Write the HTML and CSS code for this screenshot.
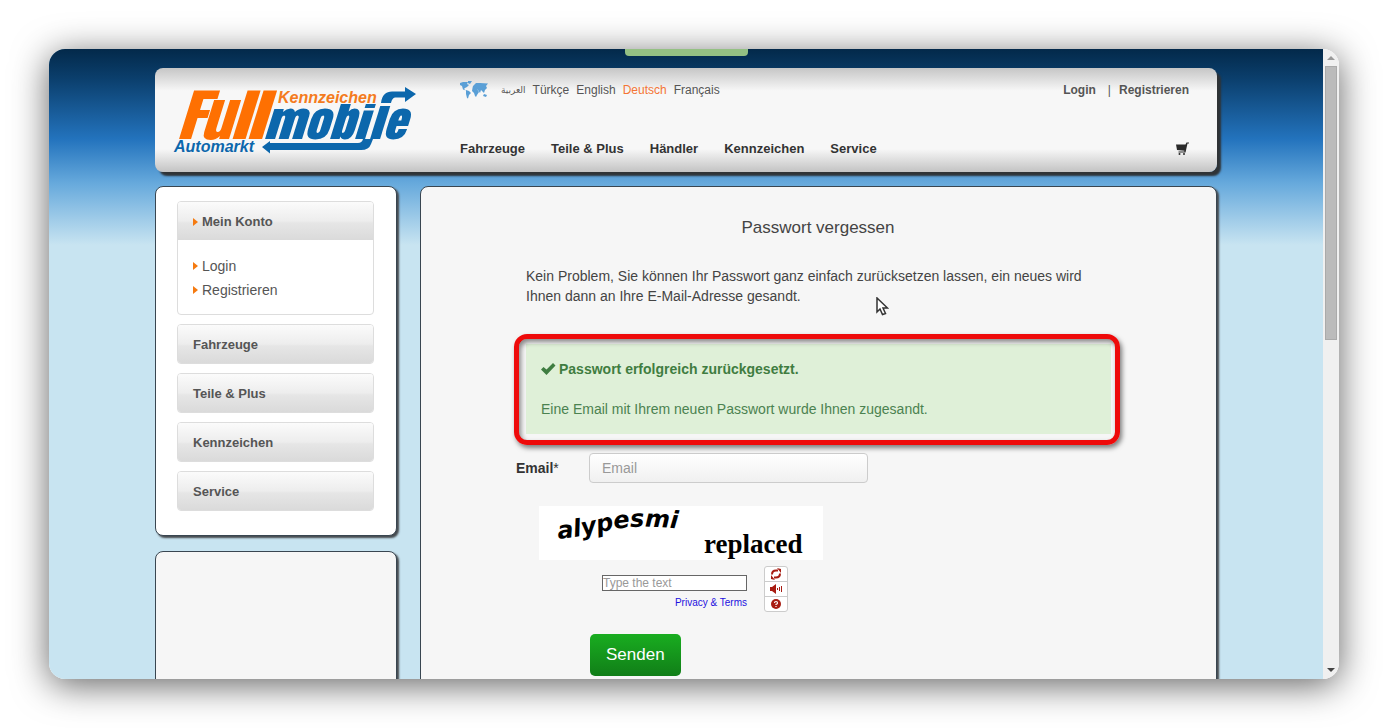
FILE: index.html
```html
<!DOCTYPE html>
<html lang="de">
<head>
<meta charset="utf-8">
<title>Passwort vergessen – Fullmobile Automarkt</title>
<link rel="stylesheet" href="styles.css">
</head>
<body>
<div class="window">
  <div class="page">
    <div class="notch"></div>
    <div class="container">
      <header class="header">
        <a class="logo" href="#" aria-label="Fullmobile">
          <svg width="246" height="72" viewBox="0 0 246 72" role="img">
            <g fill="#fe7002" transform="translate(17.700 0) skewX(-17.200)">
              <path d="M6 8.500H32V17H18V28H28V36H18V57H6Z"/>
              <path d="M29 18H40V46Q40 50 42.500 50Q45 50 45 46V18H56V57H46V54Q43 58 38 58Q29 58 29 50Z"/>
              <path d="M59.500 8.500H72.500V57H59.500Z"/>
              <path d="M75.500 8.500H89V57H75.500Z"/>
            </g>
            <g fill="#0c67ac" transform="translate(17.700 0) skewX(-17.200)">
              <path d="M92 27H101.500V30Q104 26.500 108 26.500Q112 26.500 113.500 30Q116 26.500 121 26.500Q129 26.500 129 34V57H119V36Q119 33.500 117 33.500Q115.500 33.500 115.500 36V57H105.500V36Q105.500 33.500 103.800 33.500Q102 33.500 102 36V57H92Z"/>
              <path fill-rule="evenodd" d="M142.500 26.500Q153.500 26.500 153.500 37V47Q153.500 57.500 142.500 57.500Q132 57.500 132 47V37Q132 26.500 142.500 26.500ZM142.800 33.500Q141 33.500 141 36.500V48Q141 51 142.800 51Q144.500 51 144.500 48V36.500Q144.500 33.500 142.800 33.500Z"/>
              <path fill-rule="evenodd" d="M157 22H167V29.500Q169 26.500 172 26.500Q179 26.500 179 35V48Q179 57.500 172 57.500Q168.500 57.500 166.500 54.500V57H157ZM168 33.500Q166.500 33.500 166.500 36.500V48Q166.500 51 168 51Q169.500 51 169.500 48V36.500Q169.500 33.500 168 33.500Z"/>
              <path d="M182 22H192V26H182ZM182 28.500H192V57H182Z"/>
              <path d="M197 24H207V57H197Z"/>
              <path fill-rule="evenodd" d="M220.500 26.500Q231 26.500 231 37V44H219.500V48Q219.500 51 221 51Q222.500 51 222.500 47H231Q231 57.500 220.500 57.500Q210.500 57.500 210.500 47V37Q210.500 26.500 220.500 26.500ZM221 33.500Q219.500 33.500 219.500 38.500H222.500Q222.500 33.500 221 33.500Z"/>
            </g>
            <g fill="#0c67ac">
              <path d="M200 57L198 62Q196 68 188 68H97V71.500L89 65L97 59V61H185Q189 61 190 57Z"/>
              <path d="M208 21C209 13 213 9.500 219 9.500H232V5L243 12L232 20V15.500H222Q219 16 218 21Z"/>
            </g>
            <text class="logo-top" x="105" y="21">Kennzeichen</text>
            <text class="logo-bottom" x="1" y="70">Automarkt</text>
          </svg>
        </a>
        <div class="header-main">
          <div class="topline">
            <div class="languages">
              <svg class="map" width="28" height="18" viewBox="0 0 28 18" fill="#5a9fd6" aria-hidden="true">
                <path d="M0 2L3 1L8 1L7 3L9 4L7 6L5 7L4 8L6 9.500L3 8.500L2 5L0 4ZM8 0L12 0L10 3L8 2ZM6 9L9 10L11 12L9 14L8 17.500L7 17L6 13Z"/>
                <path d="M13 5L16 2L20 2L28 2.500L26 5L27 7L25 9L24 12L22 10L21 9L20 12L18 9L17 8L19 11L17 14L16 16L15 15L14 12L12 10L12.500 7ZM24 13L27 14L26 16L23 15Z"/>
              </svg>
              <a class="arabic" href="#" lang="ar">العربية</a>
              <a href="#">Türkçe</a>
              <a href="#">English</a>
              <a class="active" href="#">Deutsch</a>
              <a href="#">Français</a>
            </div>
            <div class="account">
              <a href="#">Login</a><span class="divider">|</span><a href="#">Registrieren</a>
            </div>
          </div>
          <nav class="nav">
            <a href="#">Fahrzeuge</a>
            <a href="#">Teile &amp; Plus</a>
            <a href="#">Händler</a>
            <a href="#">Kennzeichen</a>
            <a href="#">Service</a>
            <a class="cart" href="#" aria-label="Warenkorb">
              <svg width="13" height="14" viewBox="0 0 13 14" fill="#2a2a2a"><path d="M0 2.500H9.500L10.500 .500H13V1.500H11.500L9.500 10.500H2.500V9.500H8.300L8.500 8.800L1 8Z"/><circle cx="3.500" cy="12" r="1"/><circle cx="8" cy="12" r="1"/></svg>
            </a>
          </nav>
        </div>
      </header>
      <div class="columns">
        <div class="side">
          <aside class="panel menu">
            <section class="group">
              <a class="bar open" href="#"><span class="arrow"></span>Mein Konto</a>
              <div class="links">
                <a href="#"><span class="arrow"></span>Login</a>
                <a href="#"><span class="arrow"></span>Registrieren</a>
              </div>
            </section>
            <section class="group"><a class="bar" href="#">Fahrzeuge</a></section>
            <section class="group"><a class="bar" href="#">Teile &amp; Plus</a></section>
            <section class="group"><a class="bar" href="#">Kennzeichen</a></section>
            <section class="group"><a class="bar" href="#">Service</a></section>
          </aside>
          <div class="panel empty"></div>
        </div>
        <main class="panel content">
          <h1>Passwort vergessen</h1>
          <p class="intro">Kein Problem, Sie können Ihr Passwort ganz einfach zurücksetzen lassen, ein neues wird Ihnen dann an Ihre E-Mail-Adresse gesandt.</p>
          <div class="highlight">
            <div class="alert" role="status">
              <strong><svg width="15" height="12" viewBox="0 0 15 12" fill="#3f7d41" aria-hidden="true"><path d="M0 6.500L2.500 4L5.500 6.500L12 0L14.500 2.500L5.500 12Z"/></svg>Passwort erfolgreich zurückgesetzt.</strong>
              <p>Eine Email mit Ihrem neuen Passwort wurde Ihnen zugesandt.</p>
            </div>
          </div>
          <form class="form">
            <div class="row">
              <label for="email">Email<span class="star">*</span></label>
              <input class="email" id="email" type="email" placeholder="Email">
            </div>
            <div class="captcha">
              <svg class="words" width="284" height="54" viewBox="0 0 284 54" role="img" aria-label="Captcha">
                <rect width="284" height="54" fill="#fff"/>
                <path id="wave" d="M19 33C40 31 58 27 72 24S110 18 160 25" fill="none"/>
                <text class="warped"><textPath href="#wave">alypesmi</textPath></text>
                <text class="plain" x="165" y="47">replaced</text>
              </svg>
              <div class="captcha-entry">
                <div class="captcha-field">
                  <input id="answer" type="text" placeholder="Type the text" aria-label="Type the text">
                  <a href="#">Privacy &amp; Terms</a>
                </div>
                <div class="tools">
                  <button type="button" aria-label="Neu laden"><svg width="12" height="12" viewBox="0 0 12 12" fill="none" stroke="#a81c12" stroke-width="2"><path d="M2 6.500Q2 2.500 6 2.500H8M10 5.500Q10 9.500 6 9.500H4"/><path fill="#a81c12" stroke="none" d="M7 0L11 1V5ZM5 12L1 11V7Z"/></svg></button>
                  <button type="button" aria-label="Anhören"><svg width="12" height="10" viewBox="0 0 12 10" fill="#a81c12"><path d="M0 3H2L6 0V10L2 7H0ZM7 4H8V6H7ZM9 3H10V7H9ZM11 2H12V8H11Z"/></svg></button>
                  <button type="button" aria-label="Hilfe"><svg width="10" height="10" viewBox="0 0 10 10"><circle cx="5" cy="5" r="5" fill="#a81c12"/><path d="M3.500 4Q3.500 2.500 5 2.500Q6.500 2.500 6.500 4Q6.500 5 5 5.300V6M5 7V8" fill="none" stroke="#fff" stroke-width="1.200"/></svg></button>
                </div>
              </div>
            </div>
            <button class="send" type="submit">Senden</button>
          </form>
        </main>
      </div>
    </div>
  </div>
  <div class="scrollbar" aria-hidden="true"><span class="up"></span><span class="thumb"></span><span class="down"></span></div>
  <svg class="pointer" width="13" height="19" viewBox="0 0 13 19" aria-hidden="true"><path d="M1 1V15L4 12L6.500 17.500L9.500 16.500L7 11H11.500Z" fill="#fff" stroke="#333" stroke-width="1.500"/></svg>
</div>
</body>
</html>
```
FILE: styles.css
```css
* { box-sizing: border-box; }

body {
  margin: 0;
  height: 100vh;
  padding: 49px;
  background: #fff;
  color: #444;
  font: 14px/20px "Liberation Sans", Arial, sans-serif;
  overflow: hidden;
}

a { color: inherit; text-decoration: none; }
h1, p { margin: 0; }
input, button { font: inherit; margin: 0; }

.window {
  position: relative;
  display: flex;
  height: 100%;
  border-radius: 16px;
  overflow: hidden;
}

body::before {
  content: "";
  position: absolute;
  inset: 49px;
  border-radius: 16px;
  box-shadow: 0 6px 36px rgba(0, 0, 0, .62);
}

.page {
  position: relative;
  flex: 1;
  padding: 19px 24px 0;
  overflow: hidden;
  background: #c8e4f1 linear-gradient(#03294a, #0b3f6d 30px, #2373bd 90px, #66a9dc 134px, #c8e4f1 196px) no-repeat;
  background-size: 100% 196px;
}

.notch {
  position: absolute;
  top: 0;
  left: 576px;
  width: 123px;
  height: 7px;
  border-radius: 0 0 4px 4px;
  background: #94c083;
}

.container { max-width: 1062px; margin: 0 auto; }

.header {
  display: flex;
  height: 104px;
  border-radius: 8px;
  padding: 12px 28px 0 18px;
  background: linear-gradient(#c6c6c6, #f7f7f7 22%, #f7f7f7 78%, #c3c3c3);
  box-shadow: 4px 4px 2px #2f3336;
}

.logo { display: block; margin-top: 2px; }
.logo svg { display: block; }
.logo-top, .logo-bottom { font: italic bold 16px "Liberation Sans", Arial, sans-serif; }
.logo-top { fill: #f47b20; }
.logo-bottom { fill: #0c67ac; }

.header-main {
  flex: 1;
  display: flex;
  flex-direction: column;
  gap: 39px;
  padding-left: 41px;
}

.topline { display: flex; justify-content: space-between; font-size: 12px; }
.languages { display: flex; align-items: center; gap: 7px; color: #555; }
.map { margin-right: 6px; }
.arabic { font-family: "DejaVu Sans", sans-serif; font-size: 9px; }
.active { color: #f47535; }
.account { display: flex; font-weight: bold; color: #555; }
.divider { margin: 0 8px 0 12px; font-weight: normal; }

.nav {
  display: flex;
  align-items: center;
  gap: 26px;
  font-size: 13px;
  font-weight: bold;
  color: #333;
}
.cart { display: flex; margin-left: auto; }

.columns {
  display: grid;
  grid-template-columns: 242px 1fr;
  gap: 23px;
  margin-top: 14px;
}

.panel {
  border: 1px solid #394651;
  border-radius: 8px;
  background: #f6f6f6;
  box-shadow: 2px 2px 2px #45494d;
}

.menu {
  display: flex;
  flex-direction: column;
  gap: 9px;
  padding: 14px 22px 24px 21px;
  background: #fff;
}

.empty { height: 200px; margin-top: 15px; }

.group {
  border: 1px solid #ddd;
  border-radius: 4px;
  overflow: hidden;
}

.bar {
  display: flex;
  align-items: center;
  height: 38px;
  padding: 2px 0 0 15px;
  background: linear-gradient(#fbfbfb, #ededed 50%, #e6e6e6 55%, #dadada);
  font-size: 13px;
  font-weight: bold;
  color: #555;
}

.arrow {
  flex: none;
  width: 0;
  height: 0;
  margin-right: 4px;
  border: solid transparent;
  border-width: 4px 0 4px 5px;
  border-left-color: #f57a10;
}

.links { padding: 14px 15px 12px; color: #555; }
.links a { display: flex; align-items: center; height: 24px; }

.content { padding: 31px 96px 80px 95px; }

h1 {
  font-size: 17px;
  font-weight: normal;
  line-height: 20px;
  text-align: center;
  color: #444;
}

.intro { padding: 28px 10px 28px; }

.highlight {
  position: relative;
  margin-left: -2px;
  padding: 5px 4px 6px 7px;
  border: 5px solid #ee0a0a;
  border-radius: 13px;
  box-shadow: 2px 3px 5px rgba(0, 0, 0, .5);
}
.highlight::after {
  content: "";
  position: absolute;
  inset: 0;
  border-radius: 8px;
  box-shadow: inset 2px 3px 5px rgba(0, 0, 0, .45);
}

.alert { padding: 15px; background: #dff0d8; color: #4b8250; }
.alert strong { display: flex; align-items: center; color: #3f7d41; }
.alert strong svg { margin-right: 3px; }
.alert p { margin-top: 20px; }

.row { display: flex; align-items: center; margin-top: 8px; }
label { width: 73px; font-weight: bold; color: #333; }
.star { font-weight: normal; }

.email {
  width: 279px;
  height: 30px;
  padding: 0 12px;
  border: 1px solid #ccc;
  border-radius: 4px;
  background: linear-gradient(#fff, #f0f0f0);
}
input::placeholder { color: #999; opacity: 1; }

.captcha { margin: 23px 0 0 23px; }
.words { display: block; }
.warped { font: italic bold 24px "DejaVu Sans", sans-serif; }
.plain { font: bold 27px "Liberation Serif", serif; }

.captcha-entry { display: flex; gap: 17px; margin: 6px 0 0 63px; }
.captcha-field { display: flex; flex-direction: column; align-items: flex-end; padding-top: 9px; }
.captcha-field input {
  width: 145px;
  height: 16px;
  padding: 0;
  border: 1px solid #666;
  background: #fff;
  font-size: 12px;
}
.captcha-field a { margin-top: 2px; color: #1c10e0; font-size: 10px; }

.tools {
  width: 24px;
  height: 46px;
  display: flex;
  flex-direction: column;
  border: 1px solid #ccc;
  border-radius: 3px;
  background: #fff;
}
.tools button {
  flex: 1;
  display: flex;
  align-items: center;
  justify-content: center;
  padding: 0;
  border: 0;
  background: none;
}
.tools button + button { border-top: 1px solid #ccc; }

.send {
  display: block;
  margin: 21px 0 0 74px;
  padding: 11px 16px;
  border: 0;
  border-radius: 5px;
  background: linear-gradient(#19ad20, #117e18);
  color: #fff;
  font-size: 17px;
  line-height: 20px;
}

.scrollbar {
  width: 16px;
  display: flex;
  flex-direction: column;
  align-items: center;
  background: #f0f0f0;
}
.up, .down { width: 0; height: 0; border: 4px solid transparent; border-top: 0; border-bottom: 4px solid #999; margin: 7px 0 6px; }
.thumb { width: 12px; height: 274px; background: #bbb; border: 1px solid #aaa; }
.down { margin: auto 0 7px; border-top: 4px solid #444; border-bottom: 0; }

.pointer { position: absolute; left: 827px; top: 248px; }
```
